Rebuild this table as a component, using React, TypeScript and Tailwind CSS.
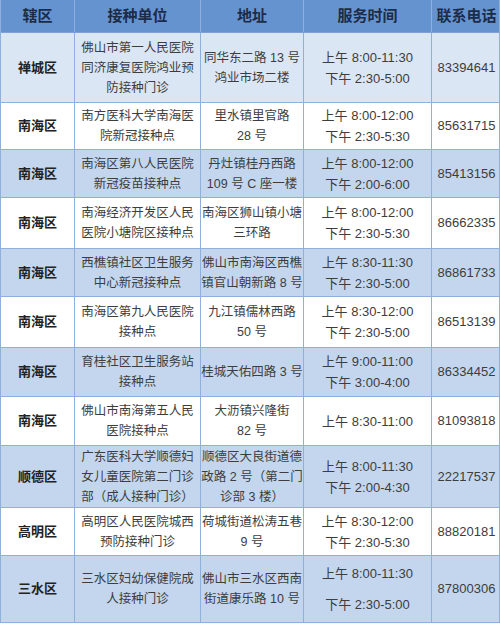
const font = '[font-family:"Liberation_Sans","Noto_Sans_CJK_SC",sans-serif]';

type Row = {
  area: string;
  unit: string[];
  addr: string[];
  time: string[];
  phone: string;
  h: string;
  bg: string;
  timeGap?: string;
};

const rows: Row[] = [
  { area: '禅城区', unit: ['佛山市第一人民医院', '同济康复医院鸿业预', '防接种门诊'], addr: ['同华东二路 13 号', '鸿业市场二楼'], time: ['上午 8:00-11:30', '下午 2:30-5:00'], phone: '83394641', h: 'h-[70px]', bg: 'bg-[#dbe6f4]' },
  { area: '南海区', unit: ['南方医科大学南海医', '院新冠接种点'], addr: ['里水镇里官路', '28 号'], time: ['上午 8:00-12:00', '下午 2:30-5:30'], phone: '85631715', h: 'h-[47px]', bg: 'bg-white' },
  { area: '南海区', unit: ['南海区第八人民医院', '新冠疫苗接种点'], addr: ['丹灶镇桂丹西路', '109 号 C 座一楼'], time: ['上午 8:00-12:00', '下午 2:00-6:00'], phone: '85413156', h: 'h-[48px]', bg: 'bg-[#c3d6ee]' },
  { area: '南海区', unit: ['南海经济开发区人民', '医院小塘院区接种点'], addr: ['南海区狮山镇小塘', '三环路'], time: ['上午 8:00-12:00', '下午 2:30-5:30'], phone: '86662335', h: 'h-[51px]', bg: 'bg-white' },
  { area: '南海区', unit: ['西樵镇社区卫生服务', '中心新冠接种点'], addr: ['佛山市南海区西樵', '镇官山朝新路 8 号'], time: ['上午 8:30-11:30', '下午 2:30-5:00'], phone: '86861733', h: 'h-[48px]', bg: 'bg-[#c3d6ee]' },
  { area: '南海区', unit: ['南海区第九人民医院', '接种点'], addr: ['九江镇儒林西路', '50 号'], time: ['上午 8:30-12:00', '下午 2:30-5:00'], phone: '86513139', h: 'h-[51px]', bg: 'bg-white' },
  { area: '南海区', unit: ['育桂社区卫生服务站', '接种点'], addr: ['桂城天佑四路 3 号'], time: ['上午 9:00-11:00', '下午 3:00-4:00'], phone: '86334452', h: 'h-[49px]', bg: 'bg-[#c3d6ee]' },
  { area: '南海区', unit: ['佛山市南海第五人民', '医院接种点'], addr: ['大沥镇兴隆街', '82 号'], time: ['上午 8:30-11:00'], phone: '81093818', h: 'h-[49px]', bg: 'bg-white' },
  { area: '顺德区', unit: ['广东医科大学顺德妇', '女儿童医院第二门诊', '部（成人接种门诊）'], addr: ['顺德区大良街道德', '政路 2 号（第二门', '诊部 3 楼）'], time: ['上午 8:00-11:30', '下午 2:00-4:30'], phone: '22217537', h: 'h-[62px]', bg: 'bg-[#c3d6ee]' },
  { area: '高明区', unit: ['高明区人民医院城西', '预防接种门诊'], addr: ['荷城街道松涛五巷', '9 号'], time: ['上午 8:30-12:00', '下午 2:30-5:30'], phone: '88820181', h: 'h-[48px]', bg: 'bg-white' },
  { area: '三水区', unit: ['三水区妇幼保健院成', '人接种门诊'], addr: ['佛山市三水区西南', '街道康乐路 10 号'], time: ['上午 8:00-11:30', '下午 2:30-5:00'], phone: '87800306', h: 'h-[66px]', bg: 'bg-[#c3d6ee]', timeGap: 'gap-[10px]' },
];

const cols = 'grid grid-cols-[74px_126px_103px_128px_69px]';
const cell = 'flex flex-col items-center justify-center text-center border-r border-[#8fb0dc] last:border-r-0';

function Lines({ lines }: { lines: string[] }) {
  return (
    <>
      {lines.map((l) => (
        <span key={l} className="whitespace-nowrap">{l}</span>
      ))}
    </>
  );
}

export default function App() {
  return (
    <div className={`w-[500px] h-[624px] bg-[#f4f6f9] ${font}`}>
      <div className="border-x border-b border-[#8fb0dc]">
        <div className={`${cols} h-[33px] bg-[#6593d0] text-[15px] font-bold text-[#1c2c48] border-b border-[#7ea2d4]`}>
          {['辖区', '接种单位', '地址', '服务时间', '联系电话'].map((t) => (
            <div key={t} className={`${cell} border-[#7ea2d4]`}>{t}</div>
          ))}
        </div>
        {rows.map((r, i) => (
          <div
            key={i}
            className={`${cols} ${r.h} ${r.bg} text-[12.5px] leading-[20px] text-[#3d3d3d] border-b border-[#8fb0dc] last:border-b-0`}
          >
            <div className={`${cell} font-bold text-[13px] text-[#222]`}>{r.area}</div>
            <div className={cell}><Lines lines={r.unit} /></div>
            <div className={cell}><Lines lines={r.addr} /></div>
            <div className={`${cell} ${r.timeGap ?? ''} text-[13px] leading-[21px]`}><Lines lines={r.time} /></div>
            <div className={`${cell} text-[13px]`}>{r.phone}</div>
          </div>
        ))}
      </div>
    </div>
  );
}
